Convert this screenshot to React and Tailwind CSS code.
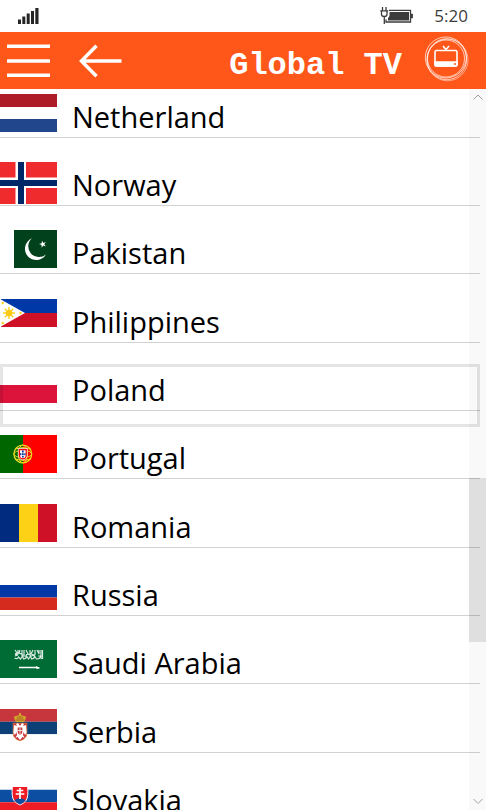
import React from 'react';

const flagClass = 'block w-[57px] shrink-0';

function Netherlands() {
  return (
    <svg className={`${flagClass} h-[38px]`} viewBox="0 0 57 38" aria-hidden="true">
      <path fill="#ae1c28" d="M0 0h57v13H0z" />
      <path fill="#fff" d="M0 13h57v12H0z" />
      <path fill="#21468b" d="M0 25h57v13H0z" />
    </svg>
  );
}

function Norway() {
  return (
    <svg className={`${flagClass} h-[42px]`} viewBox="0 0 57 42" aria-hidden="true">
      <path fill="#ef2b2d" d="M0 0h57v42H0z" />
      <path fill="#fff" d="M15.500 0h10.500v42h-10.500zM0 15.500h57v10.500H0z" />
      <path fill="#002868" d="M18 0h6v42h-6zM0 18h57v6H0z" />
    </svg>
  );
}

function Pakistan() {
  return (
    <svg className={`${flagClass} h-[38px]`} viewBox="0 0 57 38" aria-hidden="true">
      <path fill="#fff" d="M0 0h14v38H0z" />
      <path fill="#01411c" d="M14 0h43v38H14z" />
      <path fill="#fff" d="M32 8.300A11.300 11.300 0 1 0 46 24.500A9.800 9.800 0 1 1 32 8.300z" />
      <path fill="#fff" d="M42 10.700l1.400 2.200 2.500-.8-1.600 2.100 1.500 2.200-2.500-.8-1.700 2.100v-2.700l-2.500-1 2.600-.7z" />
    </svg>
  );
}

function Philippines() {
  return (
    <svg className={`${flagClass} h-[28px]`} viewBox="0 0 57 28" aria-hidden="true">
      <path fill="#0038a8" d="M1 0h56v14H1z" />
      <path fill="#ce1126" d="M1 14h56v14H1z" />
      <path fill="#fff" d="M0 0L25 14 0 28z" />
      <g stroke="#fcd116" strokeWidth="1.400">
        <path d="M9 8v12M3 14h12M4.800 9.800l8.400 8.400M4.800 18.200l8.400-8.400" />
      </g>
      <circle cx="9" cy="14" r="3.200" fill="#fcc916" />
      <g fill="#fcd116">
        <circle cx="2.700" cy="4" r="1.200" />
        <circle cx="2.700" cy="24" r="1.200" />
        <circle cx="20.500" cy="14" r="1.200" />
      </g>
    </svg>
  );
}

function Poland() {
  return (
    <svg className={`${flagClass} h-[36px]`} viewBox="0 0 57 36" aria-hidden="true">
      <path fill="#fff" d="M0 0h57v18H0z" />
      <path fill="#dc143c" d="M0 18h57v18H0z" />
    </svg>
  );
}

function Portugal() {
  return (
    <svg className={`${flagClass} h-[38px]`} viewBox="0 0 57 38" aria-hidden="true">
      <path fill="#060" d="M0 0h23v38H0z" />
      <path fill="#f00" d="M23 0h34v38H23z" />
      <g fill="none" stroke="#e5d823">
        <circle cx="22.800" cy="19" r="8.900" strokeWidth="1.300" />
        <ellipse cx="22.800" cy="19" rx="8.900" ry="3.600" />
        <ellipse cx="22.800" cy="19" rx="4.500" ry="8.900" />
        <path d="M15 14q8-3 16 0M15 24q8 3 16 0" />
      </g>
      <path fill="#f00" stroke="#fff" strokeWidth=".7" d="M18.300 13.500h9V20a4.500 4.800 0 0 1-9 0z" />
      <path fill="#fff" d="M20 15.300h5.600v4.900a2.800 3 0 0 1-5.600 0z" />
      <path fill="#039" d="M22 15.500h1.700v2H22zM22 18.200h1.700v2H22zM22 21h1.700v1.500H22zM20.100 18.200h1.300v2h-1.300zM24.300 18.200h1.300v2h-1.300z" />
    </svg>
  );
}

function Romania() {
  return (
    <svg className={`${flagClass} h-[38px]`} viewBox="0 0 57 38" aria-hidden="true">
      <path fill="#002b7f" d="M0 0h19v38H0z" />
      <path fill="#fcd116" d="M19 0h19v38H19z" />
      <path fill="#ce1126" d="M38 0h19v38H38z" />
    </svg>
  );
}

function Russia() {
  return (
    <svg className={`${flagClass} h-[38px]`} viewBox="0 0 57 38" aria-hidden="true">
      <path fill="#fff" d="M0 0h57v13H0z" />
      <path fill="#0039a6" d="M0 13h57v12.500H0z" />
      <path fill="#d52b1e" d="M0 25.500h57V38H0z" />
    </svg>
  );
}

function SaudiArabia() {
  return (
    <svg className={`${flagClass} h-[38px]`} viewBox="0 0 57 38" aria-hidden="true">
      <path fill="#006c35" d="M0 0h57v38H0z" />
      <g fill="none" stroke="#fff" strokeWidth="1.200" strokeOpacity=".85">
        <path d="M15 10l2 3-2 1M18 10v4l-3 1M20 10l-1 3 3 1v-4M24 10v5h-3M26 10l2 4-2 1M30 10v5l-2-1M33 10l-2 4 3 1M35 10v5M37 10l2 4v-4M41 10v7M42.500 10v9" />
        <path d="M14.500 18q3 1.500 4-1l2 2 2-3 1 3q3 0 3-3l2 3 2-3 1 3q3 0 3-3l2 3q4 0 4-3l1 3M15 16l3-1M22 16h5M31 16l4-1M38 16h3" />
      </g>
      <path fill="#fff" d="M19 26.700h17v-.7l2 1 1.500.2v1.300L37 29l-1-.7H19z" />
    </svg>
  );
}

function Serbia() {
  return (
    <svg className={`${flagClass} h-[38px]`} viewBox="0 0 57 38" aria-hidden="true">
      <path fill="#c6363c" d="M0 0h57v12.700H0z" />
      <path fill="#0c4076" d="M0 12.700h57v12.600H0z" />
      <path fill="#fff" d="M0 25.300h57V38H0z" />
      <path fill="#c6363c" stroke="#edb92e" strokeWidth=".4" d="M13 14h14v10q0 6-7 8-7-2-7-8z" />
      <path fill="#fff" d="M20 17l-2-3-2 1 1 2-3-1-.7 8 1.700 2 1.500-3 .5 3-1.700 3 2.200-1L20 31l2.500-3 2.200 1-1.700-3 .5-3 1.500 3 1.700-2-.7-8-3 1 1-2-2-1z" />
      <path fill="#c6363c" d="M17.700 18.500h4.600v4.500q0 2-2.300 3-2.300-1-2.300-3z" />
      <path stroke="#fff" strokeWidth=".8" d="M20 18.500V26M17.700 21.500h4.600" />
      <path fill="#d4a22b" d="M16 13l-2-4q-.5-2 2-2l3-1V4h2v2l3 1q2.500 0 2 2l-2 4z" />
      <path fill="none" stroke="#86351e" strokeWidth=".6" d="M16 11h8M18 10V7.500M20 10V7M22 10V7.500" />
    </svg>
  );
}

function Slovakia() {
  return (
    <svg className={`${flagClass} h-[38px]`} viewBox="0 0 57 38" aria-hidden="true">
      <path fill="#fff" d="M0 0h57v12.700H0z" />
      <path fill="#0b4ea2" d="M0 12.700h57v12.600H0z" />
      <path fill="#ee1c25" d="M0 25.300h57V38H0z" />
      <path fill="#ee1c25" stroke="#fff" strokeWidth="1" d="M12.300 9.500h15.400q1 11-2 14.500-2 2.500-5.700 4-3.700-1.500-5.700-4-3-3.500-2-14.500z" />
      <path fill="#0b4ea2" d="M14.500 23.500q1-2 3-1.500 2.500-2.500 5 0 2-.5 3 1.500-2 2.500-5.500 4-3.500-1.500-5.500-4z" />
      <path stroke="#fff" strokeWidth="1.700" d="M20 11v11M16.700 13.500h6.600M15.700 17h8.600" />
    </svg>
  );
}

const countries = [
  { name: 'Netherland', Flag: Netherlands },
  { name: 'Norway', Flag: Norway },
  { name: 'Pakistan', Flag: Pakistan },
  { name: 'Philippines', Flag: Philippines },
  { name: 'Poland', Flag: Poland, focused: true },
  { name: 'Portugal', Flag: Portugal },
  { name: 'Romania', Flag: Romania },
  { name: 'Russia', Flag: Russia },
  { name: 'Saudi Arabia', Flag: SaudiArabia },
  { name: 'Serbia', Flag: Serbia },
  { name: 'Slovakia', Flag: Slovakia },
];

function StatusBar() {
  return (
    <div className="flex h-8 shrink-0 items-center bg-white pr-[18px] pl-[18px] text-[#3c3c3c]">
      <svg className="h-4 w-[21px]" viewBox="0 0 21 16" fill="#252525" role="img" aria-label="Signal strength">
        <path d="M0 11.500h3V16H0zM4.300 8.500h3V16h-3zM8.700 5.500h3V16h-3zM13 3h3v13h-3zM17.300 0h3.200v16h-3.200z" />
      </svg>
      <svg className="ml-auto h-[18px] w-[33px]" viewBox="0 0 33 18" role="img" aria-label="Battery charging">
        <g fill="none" stroke="#3c3c3c" strokeWidth="1.300">
          <path d="M2.500 0v3.500M6 0v3.500M.3 3.800h8M1.500 4v3.200q0 2.300 2.800 2.300 2.700 0 2.700-2.300V4M4.300 9.500v7.500" />
          <path d="M9 3.300h21.500v11.700H6v-2.500" />
        </g>
        <path fill="#3c3c3c" d="M9.500 5H29v8.400H8v-2.500q1.500-1 1.500-3zM31 6.800h1.900v4.500H31z" />
      </svg>
      <time className="ml-[21px] font-['Open_Sans','Noto_Sans',sans-serif] text-[17px] leading-6">5:20</time>
    </div>
  );
}

function Header() {
  return (
    <header className="flex h-[57px] shrink-0 items-center bg-[#ff571a] pr-[17px] pl-[7px] text-white">
      <button type="button" aria-label="Menu">
        <svg className="h-[34px] w-[43px]" viewBox="0 0 43 34" fill="currentColor" aria-hidden="true">
          <path d="M0 .5h43V4H0zM0 15.200h43v3.500H0zM0 29.500h43V33H0z" />
        </svg>
      </button>
      <button type="button" aria-label="Back" className="ml-[29px]">
        <svg className="h-[34px] w-[43px]" viewBox="0 0 43 34" fill="none" stroke="currentColor" strokeWidth="3.500" aria-hidden="true">
          <path d="M42.500 17H3M17.500 1.800L2.500 17l15 15.200" />
        </svg>
      </button>
      <h1 className="ml-auto pt-[10px] font-['Liberation_Mono','Courier_New',monospace] text-[32px] leading-9 font-bold">Global TV</h1>
      <svg className="mb-1 ml-[22px] h-[46px] w-[45px]" viewBox="0 0 45 46" fill="none" stroke="currentColor" aria-hidden="true">
        <g strokeOpacity=".85" strokeWidth=".8">
          <circle cx="22" cy="22.500" r="18.500" />
          <ellipse cx="22.800" cy="23.200" rx="19.800" ry="20.500" />
          <ellipse cx="21.800" cy="21.500" rx="20.500" ry="20.500" />
          <ellipse cx="23.500" cy="24" rx="20.500" ry="20.800" strokeOpacity=".6" />
        </g>
        <rect x="11" y="14.500" width="22" height="15.500" rx="1.500" strokeWidth="1.600" />
        <path strokeWidth="1.600" d="M19 10l2.900 3.500 3.200-3.500" />
        <path fill="currentColor" stroke="none" d="M10.300 25.300h23.400v3.700q0 1.800-1.700 1.800H12q-1.700 0-1.700-1.800z" />
        <circle cx="31" cy="28" r="1" fill="#ff571a" stroke="none" />
      </svg>
    </header>
  );
}

function CountryRow({ name, Flag, focused }) {
  return (
    <li className="relative mr-[6px] mb-[5px] h-[63px] pt-[3px] nth-[3n]:mb-[6px]">
      <a href="#" className="flex h-11 items-start border-b border-[#d2d2d2] text-black">
        <Flag />
        <span className="ml-[15px] pt-[3px] font-['Open_Sans','Noto_Sans',sans-serif] text-[29px] leading-10">{name}</span>
      </a>
      {focused && <span className="pointer-events-none absolute inset-0 border-[3px] border-black/10" />}
    </li>
  );
}

function ScrollBar() {
  return (
    <div className="absolute inset-y-0 right-0 flex w-[17px] flex-col items-center bg-black/[0.025] text-[#a0a0a0]">
      <svg className="h-4 w-[10px]" viewBox="0 0 10 16" fill="none" stroke="currentColor" aria-hidden="true">
        <path d="M.5 10.500L5 6l4.500 4.500" />
      </svg>
      <div className="flex w-full flex-1 flex-col">
        <div className="flex-[373]" />
        <div className="flex-[164] bg-black/10" />
        <div className="flex-[152]" />
      </div>
      <svg className="h-4 w-[10px]" viewBox="0 0 10 16" fill="none" stroke="currentColor" aria-hidden="true">
        <path d="M.5 5L5 9.500 9.500 5" />
      </svg>
    </div>
  );
}

export default function App() {
  return (
    <div className="flex h-screen flex-col overflow-hidden bg-white">
      <StatusBar />
      <Header />
      <main className="relative min-h-0 flex-1 overflow-hidden pt-[2px]">
        <ul>
          {countries.map((country) => (
            <CountryRow key={country.name} {...country} />
          ))}
        </ul>
        <ScrollBar />
      </main>
    </div>
  );
}
